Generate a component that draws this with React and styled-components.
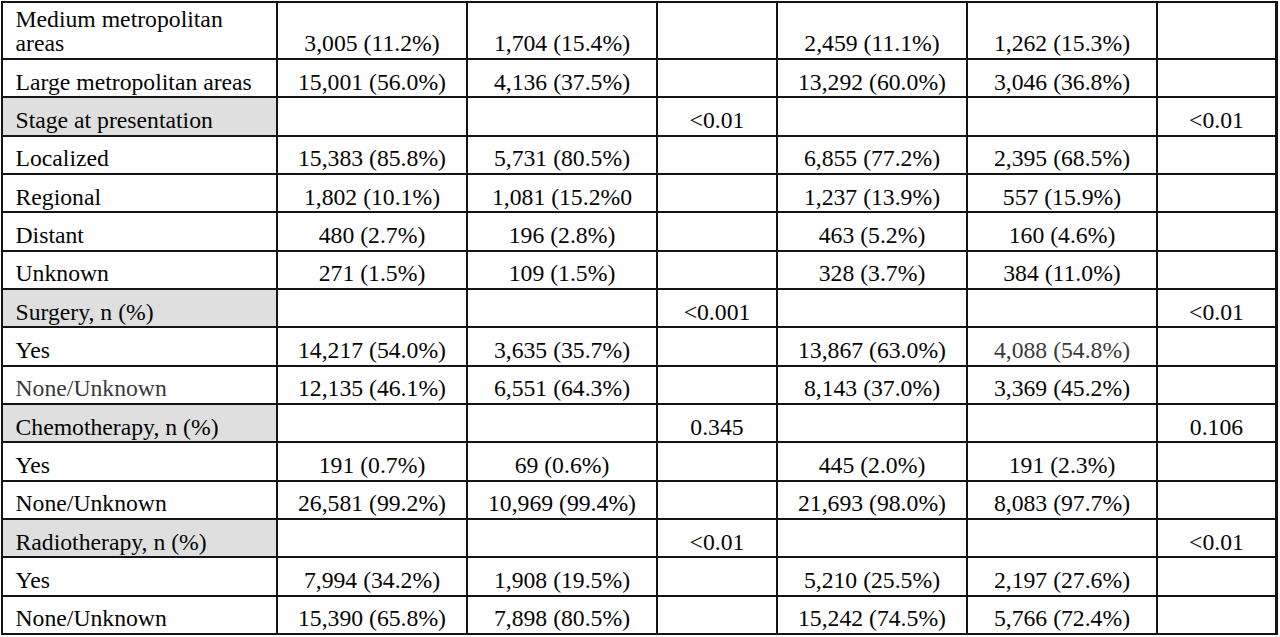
import React from "react";
import styled, { createGlobalStyle } from "styled-components";

const GlobalStyle = createGlobalStyle`
  html, body {
    margin: 0;
    padding: 0;
    background: #ffffff;
  }
  body {
    font-family: "Liberation Serif", "Times New Roman", serif;
    color: #000000;
  }
`;

const Table = styled.div`
  display: grid;
  width: max-content;
  margin: 1px 0 0 1px;
  padding: 2px 3px 2px 2px;
  gap: 2px;
  background: #141414;
  grid-template-columns: 273px 188px 188px 118px 188px 188px 117px;
  grid-template-rows: 55px repeat(15, 36.33px);
`;

const Row = styled.div`
  display: contents;
`;

const Cell = styled.div`
  display: flex;
  align-items: flex-end;
  justify-content: ${(p) => (p.$label ? "flex-start" : "center")};
  padding: 0 ${(p) => (p.$label ? "12px" : "2px")} 2px ${(p) => (p.$label ? "12.5px" : "2px")};
  background: ${(p) => (p.$shaded ? "#dfdfdf" : "#ffffff")};
  color: ${(p) => (p.$muted ? "#3a3a3a" : "#050505")};
  font-size: 23.7px;
  line-height: 24.6px;
  white-space: ${(p) => (p.$label ? "normal" : "nowrap")};
  overflow: hidden;
`;

const rows = [
  { label: "Medium metropolitan areas", v: ["3,005 (11.2%)", "1,704 (15.4%)", "", "2,459 (11.1%)", "1,262 (15.3%)", ""] },
  { label: "Large metropolitan areas", v: ["15,001 (56.0%)", "4,136 (37.5%)", "", "13,292 (60.0%)", "3,046 (36.8%)", ""] },
  { label: "Stage at presentation", head: true, v: ["", "", "<0.01", "", "", "<0.01"] },
  { label: "Localized", v: ["15,383 (85.8%)", "5,731 (80.5%)", "", "6,855 (77.2%)", "2,395 (68.5%)", ""] },
  { label: "Regional", v: ["1,802 (10.1%)", "1,081 (15.2%0", "", "1,237 (13.9%)", "557 (15.9%)", ""] },
  { label: "Distant", v: ["480 (2.7%)", "196 (2.8%)", "", "463 (5.2%)", "160 (4.6%)", ""] },
  { label: "Unknown", v: ["271 (1.5%)", "109 (1.5%)", "", "328 (3.7%)", "384 (11.0%)", ""] },
  { label: "Surgery, n (%)", head: true, v: ["", "", "<0.001", "", "", "<0.01"] },
  { label: "Yes", v: ["14,217 (54.0%)", "3,635 (35.7%)", "", "13,867 (63.0%)", "4,088 (54.8%)", ""], muted: [4] },
  { label: "None/Unknown", mutedLabel: true, v: ["12,135 (46.1%)", "6,551 (64.3%)", "", "8,143 (37.0%)", "3,369 (45.2%)", ""] },
  { label: "Chemotherapy, n (%)", head: true, v: ["", "", "0.345", "", "", "0.106"] },
  { label: "Yes", v: ["191 (0.7%)", "69 (0.6%)", "", "445 (2.0%)", "191 (2.3%)", ""] },
  { label: "None/Unknown", v: ["26,581 (99.2%)", "10,969 (99.4%)", "", "21,693 (98.0%)", "8,083 (97.7%)", ""] },
  { label: "Radiotherapy, n (%)", head: true, v: ["", "", "<0.01", "", "", "<0.01"] },
  { label: "Yes", v: ["7,994 (34.2%)", "1,908 (19.5%)", "", "5,210 (25.5%)", "2,197 (27.6%)", ""] },
  { label: "None/Unknown", v: ["15,390 (65.8%)", "7,898 (80.5%)", "", "15,242 (74.5%)", "5,766 (72.4%)", ""] },
];

export default function App() {
  return (
    <>
      <GlobalStyle />
      <Table role="table">
        {rows.map((r, i) => (
          <Row role="row" key={i}>
            <Cell role="cell" $label $shaded={r.head} $muted={r.mutedLabel}>
              {r.label}
            </Cell>
            {r.v.map((val, j) => (
              <Cell role="cell" key={j} $muted={r.muted && r.muted.includes(j)}>
                {val}
              </Cell>
            ))}
          </Row>
        ))}
      </Table>
    </>
  );
}
